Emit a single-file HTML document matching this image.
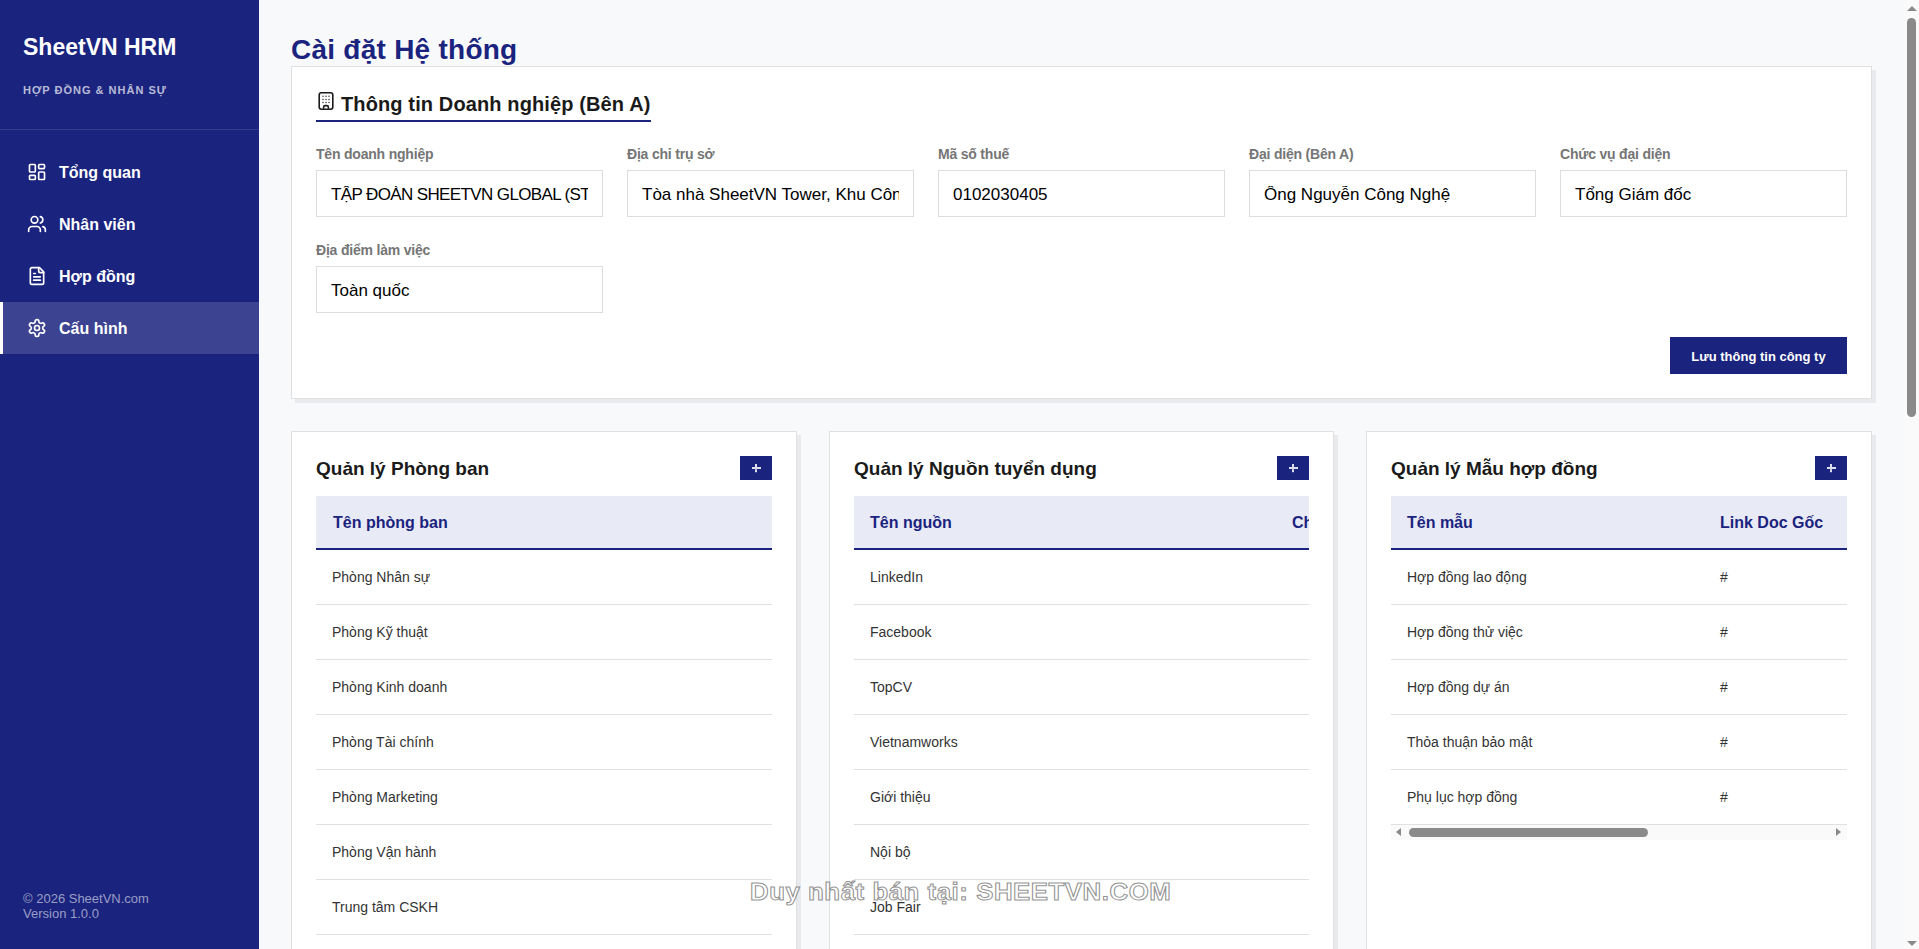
<!DOCTYPE html>
<html lang="vi">
<head>
<meta charset="utf-8">
<title>SheetVN HRM - Cài đặt Hệ thống</title>
<style>
*{box-sizing:border-box;margin:0;padding:0}
html,body{width:1919px;height:949px;overflow:hidden}
body{position:relative;background:#f8f9fa;font-family:"Liberation Sans",sans-serif;color:#212121}
.abs{position:absolute;white-space:nowrap}
/* sidebar */
#sb{position:absolute;left:0;top:0;width:259px;height:949px;background:#1a237e;color:#fff}
#sb .logo{left:23px;top:34px;font-size:23px;line-height:26px;font-weight:700;color:#fff}
#sb .sub{left:23px;top:83px;font-size:11px;line-height:14px;font-weight:700;letter-spacing:1px;color:rgba(255,255,255,.7)}
#sb .sep{position:absolute;left:0;top:129px;width:259px;height:1px;background:rgba(255,255,255,.12)}
#sb .nav{position:absolute;left:0;width:259px;height:52px}
#sb .nav.active{background:rgba(255,255,255,.15)}
#sb .nav.active:before{content:"";position:absolute;left:0;top:0;width:3px;height:52px;background:#fff}
#sb .nav svg{position:absolute;left:27px;top:16px;width:20px;height:20px;fill:none;stroke:#fff;stroke-width:2;stroke-linecap:round;stroke-linejoin:round}
#sb .nav span{position:absolute;left:59px;top:17px;font-size:16px;line-height:20px;font-weight:700;color:#fff;white-space:nowrap}
#sb .foot{left:23px;top:892px;font-size:13px;line-height:14.7px;font-weight:400;color:rgba(255,255,255,.56)}
/* main */
h1{position:absolute;left:291px;top:33px;font-size:28px;line-height:34px;font-weight:700;color:#1a237e;white-space:nowrap;letter-spacing:.25px}
.card{position:absolute;background:#fff;border:1px solid #e0e0e0;box-shadow:4px 4px 0 #e9eaee}

.ct{position:absolute;left:341px;top:92px;letter-spacing:.12px;font-size:20px;line-height:24px;font-weight:700;color:#1a1a1a;white-space:nowrap}
.ctl{position:absolute;left:316px;top:120px;width:335px;height:2px;background:#1a237e}
.lbl{position:absolute;font-size:14px;line-height:16px;font-weight:700;color:#757575;white-space:nowrap;letter-spacing:-.2px}
.inp{position:absolute;width:287px;height:47px;border:1px solid #ddd;background:#fff;overflow:hidden}
.inp span{position:absolute;left:14px;top:15px;width:257px;height:20px;overflow:hidden;font-size:17px;line-height:18px;color:#000;white-space:nowrap}
.btn{position:absolute;left:1670px;top:337px;width:177px;height:37px;background:#1a237e;color:#fff;font-size:13px;line-height:39px;font-weight:700;text-align:center;white-space:nowrap}

.sc{position:absolute;left:0;top:1px;width:100%;font-size:19px;line-height:22px;font-weight:700;color:#1a1a1a;white-space:nowrap}
.plus{position:absolute;width:32px;height:24px;background:#1a237e}
.plus:before{content:"";position:absolute;left:11.5px;top:11.3px;width:9px;height:1.4px;background:rgba(255,255,255,.85)}
.plus:after{content:"";position:absolute;left:15.3px;top:7.5px;width:1.4px;height:3.8px;background:rgba(255,255,255,.85);box-shadow:0 5.2px 0 rgba(255,255,255,.85)}
.tw{position:absolute;overflow:hidden}
.th{position:absolute;left:0;top:0;height:54px;background:#e8eaf6;border-bottom:2px solid #1a237e}
.th span,.tr span{position:absolute;white-space:nowrap}
.th span{top:18px;font-size:16px;line-height:18px;font-weight:700;color:#1a237e}
.tr{position:absolute;left:0;height:55px;border-bottom:1px solid #e0e0e0}
.tr span{top:19px;font-size:14px;line-height:16px;color:#333}

.vsb{position:absolute;left:1904px;top:0;width:15px;height:949px;background:#fafafa}
.hsb{position:absolute;left:1391px;top:825px;width:456px;height:15px;background:#fafafa}
.tri{position:absolute;width:0;height:0;border-style:solid}
.thumb{position:absolute;background:#8a8a8a;border-radius:5px}
.wm{position:absolute;left:750px;top:879px;font-size:23px;line-height:26px;font-weight:700;color:rgba(255,255,255,.6);-webkit-text-stroke:1px rgba(110,110,110,.75);white-space:nowrap;letter-spacing:.5px;transform:scaleX(1.12);transform-origin:0 0}
</style>
</head>
<body>
<div id="sb">
  <div class="abs logo">SheetVN HRM</div>
  <div class="abs sub">HỢP ĐỒNG &amp; NHÂN SỰ</div>
  <div class="sep"></div>
  <div class="nav" style="top:146px">
    <svg viewBox="0 0 24 24"><rect x="3" y="3" width="7" height="9" rx="1"/><rect x="14" y="3" width="7" height="5" rx="1"/><rect x="14" y="12" width="7" height="9" rx="1"/><rect x="3" y="16" width="7" height="5" rx="1"/></svg>
    <span>Tổng quan</span>
  </div>
  <div class="nav" style="top:198px">
    <svg viewBox="0 0 24 24"><path d="M16 21v-2a4 4 0 0 0-4-4H6a4 4 0 0 0-4 4v2"/><circle cx="9" cy="7" r="4"/><path d="M22 21v-2a4 4 0 0 0-3-3.87"/><path d="M16 3.13a4 4 0 0 1 0 7.75"/></svg>
    <span>Nhân viên</span>
  </div>
  <div class="nav" style="top:250px">
    <svg viewBox="0 0 24 24"><path d="M15 2H6a2 2 0 0 0-2 2v16a2 2 0 0 0 2 2h12a2 2 0 0 0 2-2V7Z"/><path d="M14 2v4a2 2 0 0 0 2 2h4"/><path d="M10 9H8"/><path d="M16 13H8"/><path d="M16 17H8"/></svg>
    <span>Hợp đồng</span>
  </div>
  <div class="nav active" style="top:302px">
    <svg viewBox="0 0 24 24"><path d="M12.22 2h-.44a2 2 0 0 0-2 2v.18a2 2 0 0 1-1 1.73l-.43.25a2 2 0 0 1-2 0l-.15-.08a2 2 0 0 0-2.73.73l-.22.38a2 2 0 0 0 .73 2.73l.15.1a2 2 0 0 1 1 1.72v.51a2 2 0 0 1-1 1.74l-.15.09a2 2 0 0 0-.73 2.73l.22.38a2 2 0 0 0 2.73.73l.15-.08a2 2 0 0 1 2 0l.43.25a2 2 0 0 1 1 1.73V20a2 2 0 0 0 2 2h.44a2 2 0 0 0 2-2v-.18a2 2 0 0 1 1-1.73l.43-.25a2 2 0 0 1 2 0l.15.08a2 2 0 0 0 2.73-.73l.22-.39a2 2 0 0 0-.73-2.73l-.15-.08a2 2 0 0 1-1-1.74v-.5a2 2 0 0 1 1-1.74l.15-.09a2 2 0 0 0 .73-2.73l-.22-.38a2 2 0 0 0-2.73-.73l-.15.08a2 2 0 0 1-2 0l-.43-.25a2 2 0 0 1-1-1.73V4a2 2 0 0 0-2-2z"/><circle cx="12" cy="12" r="3"/></svg>
    <span>Cấu hình</span>
  </div>
  <div class="abs foot">© 2026 SheetVN.com<br>Version 1.0.0</div>
</div>

<h1>Cài đặt Hệ thống</h1>

<!-- CARD1 -->
<div class="card" style="left:291px;top:66px;width:1581px;height:333px"></div>

<div class="ct">Thông tin Doanh nghiệp (Bên A)</div>
<svg style="position:absolute;left:317px;top:91px" width="18" height="20" viewBox="0 0 18 20"><rect x="2.2" y="1.8" width="13.6" height="16.4" rx="2.2" fill="none" stroke="#1a1a1a" stroke-width="1.6"/><g fill="#333"><circle cx="6" cy="5.3" r=".75"/><circle cx="9" cy="5.3" r=".75"/><circle cx="12" cy="5.3" r=".75"/><circle cx="6" cy="8.5" r=".75"/><circle cx="9" cy="8.5" r=".75"/><circle cx="12" cy="8.5" r=".75"/><circle cx="6" cy="11.6" r=".75"/><circle cx="9" cy="11.6" r=".75"/><circle cx="12" cy="11.6" r=".75"/></g><path d="M6.6 17.8v-1.6a1.6 1.6 0 0 1 1.6-1.6h1.6a1.6 1.6 0 0 1 1.6 1.6v1.6" fill="none" stroke="#1a1a1a" stroke-width="1.6"/></svg>
<div class="ctl"></div>
<div class="lbl" style="left:316px;top:146px">Tên doanh nghiệp</div>
<div class="inp" style="left:316px;top:170px"><span style="letter-spacing:-.62px">TẬP ĐOÀN SHEETVN GLOBAL (STG)</span></div>
<div class="lbl" style="left:627px;top:146px">Địa chỉ trụ sở</div>
<div class="inp" style="left:627px;top:170px"><span>Tòa nhà SheetVN Tower, Khu Công nghệ cao</span></div>
<div class="lbl" style="left:938px;top:146px">Mã số thuế</div>
<div class="inp" style="left:938px;top:170px"><span>0102030405</span></div>
<div class="lbl" style="left:1249px;top:146px">Đại diện (Bên A)</div>
<div class="inp" style="left:1249px;top:170px"><span>Ông Nguyễn Công Nghệ</span></div>
<div class="lbl" style="left:1560px;top:146px">Chức vụ đại diện</div>
<div class="inp" style="left:1560px;top:170px"><span>Tổng Giám đốc</span></div>
<div class="lbl" style="left:316px;top:242px">Địa điểm làm việc</div>
<div class="inp" style="left:316px;top:266px"><span>Toàn quốc</span></div>
<div class="btn">Lưu thông tin công ty</div>


<!-- CARDS2 -->
<div class="card" style="left:291px;top:431px;width:506px;height:560px"></div>
<div class="card" style="left:829px;top:431px;width:505px;height:560px"></div>
<div class="card" style="left:1366px;top:431px;width:506px;height:560px"></div>

<div class="sc" style="left:316px;top:458px;width:auto">Quản lý Phòng ban</div>
<div class="plus" style="left:740px;top:456px"></div>
<div class="tw" style="left:316px;top:496px;width:456px;height:453px">
  <div class="th" style="width:456px"><span style="left:17px">Tên phòng ban</span></div>
  <div class="tr" style="top:54px;width:456px"><span style="left:16px">Phòng Nhân sự</span></div>
  <div class="tr" style="top:109px;width:456px"><span style="left:16px">Phòng Kỹ thuật</span></div>
  <div class="tr" style="top:164px;width:456px"><span style="left:16px">Phòng Kinh doanh</span></div>
  <div class="tr" style="top:219px;width:456px"><span style="left:16px">Phòng Tài chính</span></div>
  <div class="tr" style="top:274px;width:456px"><span style="left:16px">Phòng Marketing</span></div>
  <div class="tr" style="top:329px;width:456px"><span style="left:16px">Phòng Vận hành</span></div>
  <div class="tr" style="top:384px;width:456px"><span style="left:16px">Trung tâm CSKH</span></div>
  <div class="tr" style="top:439px;width:456px"><span style="left:16px">Ban Giám đốc</span></div>
</div>
<div class="sc" style="left:854px;top:458px;width:auto">Quản lý Nguồn tuyển dụng</div>
<div class="plus" style="left:1277px;top:456px"></div>
<div class="tw" style="left:854px;top:496px;width:455px;height:453px">
  <div class="th" style="width:560px"><span style="left:16px">Tên nguồn</span><span style="left:438px">Chi phí</span></div>
  <div class="tr" style="top:54px;width:560px"><span style="left:16px">LinkedIn</span><span style="left:438px"></span></div>
  <div class="tr" style="top:109px;width:560px"><span style="left:16px">Facebook</span><span style="left:438px"></span></div>
  <div class="tr" style="top:164px;width:560px"><span style="left:16px">TopCV</span><span style="left:438px"></span></div>
  <div class="tr" style="top:219px;width:560px"><span style="left:16px">Vietnamworks</span><span style="left:438px"></span></div>
  <div class="tr" style="top:274px;width:560px"><span style="left:16px">Giới thiệu</span><span style="left:438px"></span></div>
  <div class="tr" style="top:329px;width:560px"><span style="left:16px">Nội bộ</span><span style="left:438px"></span></div>
  <div class="tr" style="top:384px;width:560px"><span style="left:16px">Job Fair</span><span style="left:438px"></span></div>
  <div class="tr" style="top:439px;width:560px"><span style="left:16px">Khác</span><span style="left:438px"></span></div>
</div>
<div class="sc" style="left:1391px;top:458px;width:auto">Quản lý Mẫu hợp đồng</div>
<div class="plus" style="left:1815px;top:456px"></div>
<div class="tw" style="left:1391px;top:496px;width:456px;height:329px">
  <div class="th" style="width:816px"><span style="left:16px">Tên mẫu</span><span style="left:329px">Link Doc Gốc</span></div>
  <div class="tr" style="top:54px;width:816px"><span style="left:16px">Hợp đồng lao động</span><span style="left:329px">#</span></div>
  <div class="tr" style="top:109px;width:816px"><span style="left:16px">Hợp đồng thử việc</span><span style="left:329px">#</span></div>
  <div class="tr" style="top:164px;width:816px"><span style="left:16px">Hợp đồng dự án</span><span style="left:329px">#</span></div>
  <div class="tr" style="top:219px;width:816px"><span style="left:16px">Thỏa thuận bảo mật</span><span style="left:329px">#</span></div>
  <div class="tr" style="top:274px;width:816px"><span style="left:16px">Phụ lục hợp đồng</span><span style="left:329px">#</span></div>
</div>

<div class="hsb">
  <div class="tri" style="left:5px;top:3px;border-width:4.5px 5px 4.5px 0;border-color:transparent #8a8a8a transparent transparent"></div>
  <div class="thumb" style="left:18px;top:3px;width:239px;height:9px"></div>
  <div class="tri" style="left:445px;top:3px;border-width:4.5px 0 4.5px 5px;border-color:transparent transparent transparent #8a8a8a"></div>
</div>
<div class="wm">Duy nhất bán tại: SHEETVN.COM</div>
<div class="vsb">
  <div class="tri" style="left:2.5px;top:6px;border-width:0 5px 5px 5px;border-color:transparent transparent #8a8a8a transparent"></div>
  <div class="thumb" style="left:3px;top:18px;width:9px;height:399px"></div>
  <div class="tri" style="left:2.5px;top:941px;border-width:5px 5px 0 5px;border-color:#8a8a8a transparent transparent transparent"></div>
</div>
</body>
</html>
